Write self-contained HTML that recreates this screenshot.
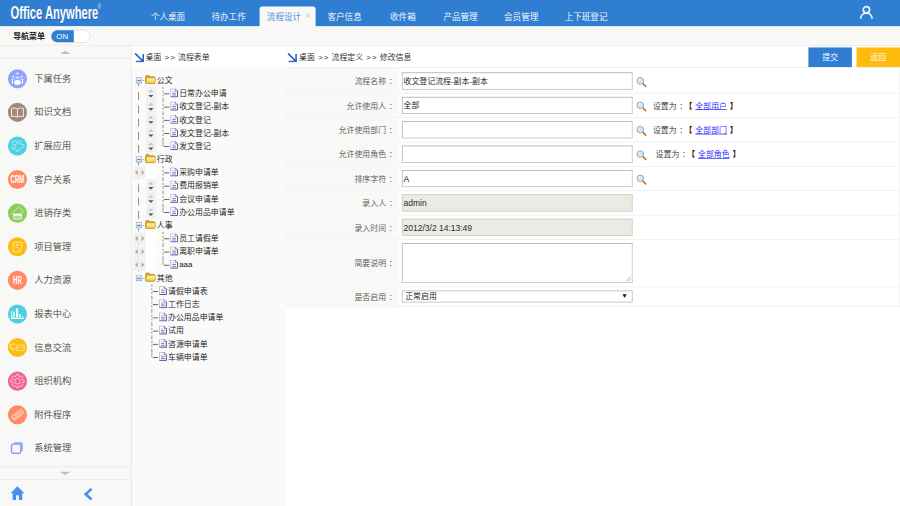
<!DOCTYPE html>
<html lang="zh-CN">
<head>
<meta charset="utf-8">
<title>Office Anywhere</title>
<style>
html,body{margin:0;padding:0;width:900px;height:506px;overflow:hidden;background:#fff;}
body{font-family:"Liberation Sans","Noto Sans CJK SC",sans-serif;font-weight:350;}
#stage{position:absolute;left:0;top:0;width:1366px;height:768px;transform:scale(0.658858);transform-origin:0 0;overflow:hidden;background:#fff;font-size:12px;color:#333;}
#stage *{box-sizing:border-box;}
.abs{position:absolute;}
/* header */
#hdr{position:absolute;left:0;top:0;width:1366px;height:40px;background:#2f7ed1;}
#logo{position:absolute;left:16px;top:3.5px;font-weight:bold;font-size:27px;line-height:32px;color:#fff;white-space:nowrap;transform:scaleX(0.628);transform-origin:0 50%;text-shadow:0 1px 1px rgba(0,0,0,.25);letter-spacing:0;}
#logo sup{font-size:12px;font-weight:normal;position:relative;top:-16px;left:-2px;vertical-align:baseline;opacity:.8;}
.tab{position:absolute;top:0;height:40px;line-height:53px;font-size:13px;color:#fff;white-space:nowrap;}
#tabact{position:absolute;left:394px;top:10px;width:85px;height:31px;background:#f8f8f6;border-radius:4px 4px 0 0;}
#tabact .t{position:absolute;left:11px;top:0;line-height:32.500px;font-size:13px;color:#3b7fd6;white-space:nowrap;}
#tabact .x{position:absolute;left:69px;top:0;line-height:29.500px;font-size:11px;color:#c9c9c9;}
/* toolbar row */
#bar2{position:absolute;left:0;top:40px;width:1366px;height:30px;background:#f8f8f6;border-bottom:1px solid #e2e2e0;}
#navlbl{position:absolute;left:20px;top:0;line-height:30px;font-size:12px;font-weight:bold;color:#222;}
#toggle{position:absolute;left:77px;top:5px;width:60px;height:20px;border-radius:10px;background:#fff;border:1px solid #d8d8d8;overflow:hidden;}
#toggle .on{position:absolute;left:-1px;top:-1px;width:35px;height:20px;background:#2f7ed1;color:#fff;font-size:12px;line-height:20px;text-align:center;padding-left:0;font-weight:400;border-radius:10px 0 0 10px;}
/* sidebar */
#side{position:absolute;left:0;top:70px;width:200px;height:698px;background:#f8f8f6;border-right:1px solid #d9d9d9;}
#sup{position:absolute;left:0;top:0;width:199px;height:19px;border-bottom:1px solid #e6e6e4;}
.tri{position:absolute;width:0;height:0;border-left:8px solid transparent;border-right:8px solid transparent;}
.mi{position:absolute;left:0;width:199px;height:51px;}
.mi .c{position:absolute;left:12px;top:11px;width:29px;height:29px;border-radius:50%;}
.mi .c svg{position:absolute;left:0;top:0;width:29px;height:29px;}
.mi .n{position:absolute;left:52px;top:0;line-height:50px;font-size:14px;color:#444;white-space:nowrap;}
.ctxt{position:absolute;left:-5px;top:0;width:39px;text-align:center;line-height:30px;color:#fff;font-weight:bold;font-size:15.5px;transform:scaleX(.6);}
#sdown{position:absolute;left:0;top:638px;width:199px;height:20px;border-top:1px solid #e2e2e0;border-bottom:1px solid #e6e6e4;}
/* tree frame */
#treef{position:absolute;left:200px;top:70px;width:234px;height:698px;background:#fafaf9;}
.crumb{position:absolute;left:0;top:0;height:32px;background:#fff;}
.crumb .tx{position:absolute;top:0;line-height:34px;font-size:12px;color:#262626;white-space:nowrap;}
.crumb svg{position:absolute;top:10px;width:15px;height:15px;margin-left:-1px;}
.tr{position:absolute;left:0;height:20px;width:234px;font-size:12px;color:#111;white-space:nowrap;}
.tr .lb{position:absolute;top:0;line-height:20px;}
.vline{position:absolute;width:0;border-left:1.300px dashed #5a5a5a;}
.vline.d{border-left:1.200px solid #3c3c3c;opacity:.85;}
.hline{position:absolute;height:1.300px;background:#1c1c1c;margin-top:-.200px;}
.spin{position:absolute;left:22px;top:0;width:15px;height:20px;background:#f1f1f0;}
.spin:before{content:"";position:absolute;left:3px;top:4px;border-left:4px solid transparent;border-right:4px solid transparent;border-bottom:4px solid #c4c4c4;}
.spin:after{content:"";position:absolute;left:3px;top:12px;border-left:4px solid transparent;border-right:4px solid transparent;border-top:4px solid #555;}
.hsp{position:absolute;left:3px;top:1px;width:35px;height:18px;background:#f0f0ef;}
.hsp i{position:absolute;left:18px;top:0;width:17px;height:18px;background:#fff;}
.hsp:before{content:"";position:absolute;left:2px;top:4.5px;border-top:4.5px solid transparent;border-bottom:4.5px solid transparent;border-right:4.5px solid #ababab;}
.hsp:after{content:"";position:absolute;left:12px;top:4.5px;border-top:4.5px solid transparent;border-bottom:4.5px solid transparent;border-left:4.5px solid #ababab;}
/* main frame */
#mainf{position:absolute;left:434px;top:70px;width:932px;height:698px;background:#fff;}
.btn{position:absolute;top:2px;height:30px;line-height:30px;color:#fff;font-size:12px;text-align:center;}
#tbl{position:absolute;left:0;top:32px;width:932px;border-right:1px solid #ececec;}
.row{position:relative;height:37px;border-top:1px solid #ebebea;background:#fff;}
.row .l{position:absolute;left:0;top:0;bottom:0;width:172px;padding-right:4px;background:#f8f8f6;text-align:right;line-height:38px;color:#555;font-size:12px;}
.inp{position:absolute;left:176px;top:5px;width:350px;height:26px;border:1px solid #b2b2b2;border-top-color:#9a9a9a;border-left-color:#a6a6a6;background:#fff;font-size:12px;line-height:25px;padding-left:1.500px;color:#111;white-space:nowrap;overflow:hidden;}
.inp.ro{background:#ebebe4;border-color:#c2c2be;color:#2a2a2a;font-size:12.900px;}
.inp.lat{font-size:13px;}
.row .l i{font-style:normal;margin-left:4px;}
.row.first{height:39px;padding-top:2px;}
.row.first .l{padding-top:2px;}
.gt{letter-spacing:1.5px;margin-left:1.5px;}
.row.first .inp{top:7px;}
.row.first .mag{top:13px;}
.mag{position:absolute;left:531px;top:11px;width:17px;height:17px;}
.setas{position:absolute;top:0;line-height:39px;font-size:12px;color:#333;white-space:nowrap;word-spacing:1px;}
.setas i{font-style:normal;margin-left:4px;margin-right:2px;}
.setas b{color:#3a0800;font-weight:bold;}
.setas a{color:#1a1aff;text-decoration:underline;}
</style>
</head>
<body>
<div id="stage">

<!-- HEADER -->
<div id="hdr">
  <div id="logo">Office Anywhere<sup>®</sup></div>
  <div class="tab" style="left:229px">个人桌面</div>
  <div class="tab" style="left:321px">待办工作</div>
  <div id="tabact"><span class="t">流程设计</span><span class="x">✕</span></div>
  <div class="tab" style="left:497px">客户信息</div>
  <div class="tab" style="left:592px">收件箱</div>
  <div class="tab" style="left:673px">产品管理</div>
  <div class="tab" style="left:765px">会员管理</div>
  <div class="tab" style="left:857px">上下班登记</div>
  <svg class="abs" style="left:1304px;top:8px;width:22px;height:22px" viewBox="0 0 24 24" fill="none" stroke="#eaf4ff" stroke-width="2.800"><circle cx="12" cy="7.400" r="5.200"/><path d="M2.5 22.5c0-6 4.5-9.6 9.500-9.600s9.500 3.600 9.500 9.600"/></svg>
</div>

<!-- SECOND BAR -->
<div id="bar2">
  <div id="navlbl">导航菜单</div>
  <div id="toggle"><div class="on">ON</div></div>
</div>

<!-- SIDEBAR -->
<div id="side">
  <div id="sup"><div class="tri" style="left:91px;top:7px;border-bottom:5px solid #afc0da;"></div></div>
  <div id="menu">
    <div class="mi" style="top:24px"><div class="c" style="background:#8fa4ff"><svg viewBox="0 0 29 29" fill="#fff"><circle cx="14.500" cy="6.600" r="1.500"/><circle cx="8.200" cy="11.200" r="1.400"/><circle cx="20.800" cy="11.200" r="1.400"/><rect x="6" y="14.500" width="1.500" height="8" rx=".700"/><rect x="21.500" y="14.500" width="1.500" height="8" rx=".700"/><rect x="11.800" y="11" width="1.300" height="3.500" fill-opacity=".9"/><rect x="14" y="11" width="1.300" height="3.500" fill-opacity=".9"/><rect x="16.200" y="11" width="1.300" height="3.500" fill-opacity=".9"/><path d="M8.500 13.500 Q9.500 16 10.500 17 M20.500 13.500 Q19.500 16 18.500 17" stroke="#fff" stroke-width=".700" fill="none" stroke-opacity=".8"/><ellipse cx="14.500" cy="20.300" rx="5.200" ry="3.700"/></svg></div><span class="n">下属任务</span></div>
    <div class="mi" style="top:75px"><div class="c" style="background:#a1887f"><svg viewBox="0 0 29 29" fill="none" stroke="#fff2e0" stroke-width="1.400" stroke-linejoin="round"><path d="M14.500 9.300 C12 7.800 8.500 7.800 5.500 8.600 V21 C8.500 20.200 12 20.200 14.500 21.700 C17 20.200 20.500 20.200 23.500 21 V8.600 C20.500 7.800 17 7.800 14.500 9.300 Z M14.500 9.300 V21.500"/></svg></div><span class="n">知识文档</span></div>
    <div class="mi" style="top:126px"><div class="c" style="background:#4dd0e1"><svg viewBox="0 0 29 29" fill="none" stroke="#d4f5fa" stroke-width="1" stroke-opacity=".85" stroke-linejoin="round"><path d="M6.600 7 H12.800 V11.600 H16.200 V7 H20.100 V12.400 H24.400 V16.200 H20.100 V19.300 H16.200 V22.800 H12.800 V19.300 H6.600 V16.200 H11.600 V12.400 H6.600 Z"/></svg></div><span class="n">扩展应用</span></div>
    <div class="mi" style="top:177px"><div class="c" style="background:#ff8a65"><span class="ctxt">CRM</span></div><span class="n">客户关系</span></div>
    <div class="mi" style="top:228px"><div class="c" style="background:#8ccc5a"><svg viewBox="0 0 29 29" fill="none" stroke="#fff" stroke-linejoin="round"><path d="M4.200 16.500 L16.300 5.200 L23.400 12.100 L21 14.600" stroke-width="1" stroke-opacity=".9"/><rect x="8.600" y="16" width="12" height="7.600" fill="#fff" fill-opacity=".3" stroke-width="1.100"/><rect x="8.300" y="15.600" width="12.600" height="2.800" fill="#fff" stroke="none"/></svg></div><span class="n">进销存类</span></div>
    <div class="mi" style="top:279px"><div class="c" style="background:#fdbc12"><svg viewBox="0 0 29 29" fill="none" stroke="#fff0c4" stroke-width="1.200" stroke-linejoin="round"><path d="M16 22.300 H8 V7.800 H21 V17"/><path d="M11.500 12 H17" stroke-width="1.800"/><path d="M11.500 15.700 H14.700" stroke-width="1.300"/><path d="M18 16.800 Q20.300 19.500 20 20.500 A2 2 0 0 1 16 20.500 Q15.800 19.500 18 16.800 Z" stroke-width="1"/></svg></div><span class="n">项目管理</span></div>
    <div class="mi" style="top:330px"><div class="c" style="background:#ff8a65"><span class="ctxt">HR</span></div><span class="n">人力资源</span></div>
    <div class="mi" style="top:381px"><div class="c" style="background:#4dd0e1"><svg viewBox="0 0 29 29" fill="#fff"><rect x="5" y="10" width="1.500" height="12"/><rect x="5" y="20.300" width="19" height="1.700"/><rect x="8.100" y="10.800" width="2.300" height="9"/><rect x="12.400" y="6.200" width="3" height="13.600"/><rect x="17" y="14.700" width="2.300" height="5.100"/><rect x="20.900" y="18.200" width="2.700" height="1.600" fill-opacity=".7"/></svg></div><span class="n">报表中心</span></div>
    <div class="mi" style="top:432px"><div class="c" style="background:#fdbc12"><svg viewBox="0 0 29 29" fill="none" stroke="#fff0c4" stroke-width="1.100" stroke-linejoin="round"><path d="M13 9.300 H4.200 V16.200 H7 L7.300 18.800 L10.500 16.200 H13"/><path d="M13.500 10.800 H24.600 V18.900 H22 L21.200 20.500 L19.500 18.900 H13.500 Z"/><path d="M15.500 14.800 H22" stroke-width="1.500" stroke-dasharray="1.400 1.100"/></svg></div><span class="n">信息交流</span></div>
    <div class="mi" style="top:483px"><div class="c" style="background:#f06292"><svg viewBox="0 0 29 29" fill="none" stroke="#ffe0ec" stroke-width="1.100" stroke-linejoin="round"><circle cx="14.500" cy="14.500" r="4.300"/><path d="M12.55 6.85 L12.77 4.45 L16.23 4.45 L16.45 6.85 L18.53 7.71 L20.39 6.17 L22.83 8.61 L21.29 10.47 L22.15 12.55 L24.55 12.77 L24.55 16.23 L22.15 16.45 L21.29 18.53 L22.83 20.39 L20.39 22.83 L18.53 21.29 L16.45 22.15 L16.23 24.55 L12.77 24.55 L12.55 22.15 L10.47 21.29 L8.61 22.83 L6.17 20.39 L7.71 18.53 L6.85 16.45 L4.45 16.23 L4.45 12.77 L6.85 12.55 L7.71 10.47 L6.17 8.61 L8.61 6.17 L10.47 7.71 Z"/></svg></div><span class="n">组织机构</span></div>
    <div class="mi" style="top:534px"><div class="c" style="background:#ff8a65"><svg viewBox="0 0 29 29" fill="none" stroke="#ffece4" stroke-width="1.200" stroke-linecap="round"><g transform="translate(14.500 14.800) rotate(-37)"><path d="M-6 3.700 H6.300 A3.700 3.700 0 0 0 6.300 -3.700 H-6.300 A2.500 2.500 0 0 0 -6.300 1.300 H5.800 A1.300 1.300 0 0 0 5.800 -1.300 H-4.500"/><path d="M-6 3.700 A3.700 3.700 0 0 1 -9.600 0"/></g></svg></div><span class="n">附件程序</span></div>
    <div class="mi" style="top:585px"><svg class="abs" style="left:15px;top:15px;width:22px;height:22px" viewBox="0 0 22 22"><rect x="5.500" y="1" width="14.500" height="14.500" rx="3" fill="#a9b6ff"/><rect x="2.500" y="4" width="14" height="14" rx="2.500" fill="#f8f8f6" stroke="#8c9eff" stroke-width="2.200"/></svg><span class="n">系统管理</span></div>
  </div><!--/menu-->
  <div id="sdown"><div class="tri" style="left:91px;top:7px;border-top:5px solid #afc0da;"></div></div>
  <svg class="abs" style="left:14.5px;top:667px;width:23px;height:23px" viewBox="0 0 22 22"><path d="M11 1 L1 11 H4 V21 H9 V14 H13 V21 H18 V11 H21 Z" fill="#4a8ef0"/></svg>
  <svg class="abs" style="left:126px;top:670px;width:16px;height:20px" viewBox="0 0 16 20" fill="none" stroke="#4a8ef0" stroke-width="4"><path d="M13 2 L4 10 L13 18"/></svg>
</div>

<!-- TREE FRAME -->
<div id="treef">
  <div class="crumb" style="width:234px">
    <svg style="left:5px" viewBox="0 0 14 14" fill="none" stroke="#2f62c8" stroke-width="2.300"><path d="M1 1 L12 12 M12.500 2 V12.500 H2"/></svg>
    <span class="tx" style="left:21px">桌面 <span class="gt">&gt;&gt;</span> 流程表单</span>
  </div>
  <div id="tree">
    <div class="tr" style="top:42px"><div class="hline" style="left:16px;top:10px;width:3px;opacity:.45"></div><div class="vline d" style="left:10px;top:15px;height:4px"></div><svg class="abs" style="left:6px;top:5px;width:10px;height:10px" viewBox="0 0 10 10"><rect x=".500" y=".500" width="9" height="9" rx="1.500" fill="url(#mg)" stroke="#5b8ed6" stroke-width="1"/><path d="M2.500 5 H7.500" stroke="#4a5568" stroke-width="1.200"/></svg><svg class="abs" style="left:20px;top:1px;width:17px;height:15px" viewBox="0 0 17 15"><path d="M1 3.500 Q1 1.500 2.800 1.500 H5.500 Q6.500 1.500 7 2.500 L7.500 3.500 H13.500 Q15 3.500 15 5 V12.500 Q15 14 13.500 14 H2.500 Q1 14 1 12.500 Z" fill="#dcae2a" stroke="#a67c12" stroke-width="1"/><path d="M2.200 6.500 Q2.400 5.300 3.700 5.300 H15 Q16.300 5.300 16.100 6.500 L15.300 12.600 Q15.100 13.700 13.900 13.700 H2.600 Q1.400 13.700 1.500 12.500 Z" fill="url(#fg)" stroke="#c39a22" stroke-width=".800"/></svg><span class="lb" style="left:38px">公文</span></div>
    <div class="tr" style="top:62px"><div class="vline d" style="left:10px;top:8px;height:12px"></div><div class="vline" style="left:47px;top:0;height:20px"></div><div class="hline" style="left:49px;top:10px;width:8px"></div><div class="spin"></div><svg class="abs" style="left:58px;top:2px;width:13px;height:14px" viewBox="0 0 13 14"><path d="M1 1 H8 L11.500 4.500 V13 H1 Z" fill="#fff" stroke="#98a8de" stroke-width="1"/><path d="M8 1 L11.500 4.500 V13 H1" fill="none" stroke="#33439a" stroke-width="1.200"/><path d="M8 1 V4.500 H11.500" fill="#e4eafb" stroke="#33439a" stroke-width=".700"/><path d="M3.500 5 H6.500" stroke="#8ea2e6" stroke-width="1"/><path d="M3.500 7.500 H9" stroke="#cf5f86" stroke-width="1.500"/><path d="M3.500 10.200 H9" stroke="#5a72d0" stroke-width="1.400"/></svg><span class="lb" style="left:72px">日常办公申请</span></div>
    <div class="tr" style="top:82px"><div class="vline d" style="left:10px;top:8px;height:12px"></div><div class="vline" style="left:47px;top:0;height:20px"></div><div class="hline" style="left:49px;top:10px;width:8px"></div><div class="spin"></div><svg class="abs" style="left:58px;top:2px;width:13px;height:14px" viewBox="0 0 13 14"><path d="M1 1 H8 L11.500 4.500 V13 H1 Z" fill="#fff" stroke="#98a8de" stroke-width="1"/><path d="M8 1 L11.500 4.500 V13 H1" fill="none" stroke="#33439a" stroke-width="1.200"/><path d="M8 1 V4.500 H11.500" fill="#e4eafb" stroke="#33439a" stroke-width=".700"/><path d="M3.500 5 H6.500" stroke="#8ea2e6" stroke-width="1"/><path d="M3.500 7.500 H9" stroke="#cf5f86" stroke-width="1.500"/><path d="M3.500 10.200 H9" stroke="#5a72d0" stroke-width="1.400"/></svg><span class="lb" style="left:72px">收文登记-副本</span></div>
    <div class="tr" style="top:102px"><div class="vline d" style="left:10px;top:8px;height:12px"></div><div class="vline" style="left:47px;top:0;height:20px"></div><div class="hline" style="left:49px;top:10px;width:8px"></div><div class="spin"></div><svg class="abs" style="left:58px;top:2px;width:13px;height:14px" viewBox="0 0 13 14"><path d="M1 1 H8 L11.500 4.500 V13 H1 Z" fill="#fff" stroke="#98a8de" stroke-width="1"/><path d="M8 1 L11.500 4.500 V13 H1" fill="none" stroke="#33439a" stroke-width="1.200"/><path d="M8 1 V4.500 H11.500" fill="#e4eafb" stroke="#33439a" stroke-width=".700"/><path d="M3.500 5 H6.500" stroke="#8ea2e6" stroke-width="1"/><path d="M3.500 7.500 H9" stroke="#cf5f86" stroke-width="1.500"/><path d="M3.500 10.200 H9" stroke="#5a72d0" stroke-width="1.400"/></svg><span class="lb" style="left:72px">收文登记</span></div>
    <div class="tr" style="top:122px"><div class="vline d" style="left:10px;top:8px;height:12px"></div><div class="vline" style="left:47px;top:0;height:20px"></div><div class="hline" style="left:49px;top:10px;width:8px"></div><div class="spin"></div><svg class="abs" style="left:58px;top:2px;width:13px;height:14px" viewBox="0 0 13 14"><path d="M1 1 H8 L11.500 4.500 V13 H1 Z" fill="#fff" stroke="#98a8de" stroke-width="1"/><path d="M8 1 L11.500 4.500 V13 H1" fill="none" stroke="#33439a" stroke-width="1.200"/><path d="M8 1 V4.500 H11.500" fill="#e4eafb" stroke="#33439a" stroke-width=".700"/><path d="M3.500 5 H6.500" stroke="#8ea2e6" stroke-width="1"/><path d="M3.500 7.500 H9" stroke="#cf5f86" stroke-width="1.500"/><path d="M3.500 10.200 H9" stroke="#5a72d0" stroke-width="1.400"/></svg><span class="lb" style="left:72px">发文登记-副本</span></div>
    <div class="tr" style="top:142px"><div class="vline d" style="left:10px;top:8px;height:12px"></div><div class="vline" style="left:47px;top:0;height:10px"></div><div class="hline" style="left:49px;top:10px;width:8px"></div><div class="spin"></div><svg class="abs" style="left:58px;top:2px;width:13px;height:14px" viewBox="0 0 13 14"><path d="M1 1 H8 L11.500 4.500 V13 H1 Z" fill="#fff" stroke="#98a8de" stroke-width="1"/><path d="M8 1 L11.500 4.500 V13 H1" fill="none" stroke="#33439a" stroke-width="1.200"/><path d="M8 1 V4.500 H11.500" fill="#e4eafb" stroke="#33439a" stroke-width=".700"/><path d="M3.500 5 H6.500" stroke="#8ea2e6" stroke-width="1"/><path d="M3.500 7.500 H9" stroke="#cf5f86" stroke-width="1.500"/><path d="M3.500 10.200 H9" stroke="#5a72d0" stroke-width="1.400"/></svg><span class="lb" style="left:72px">发文登记</span></div>
    <div class="tr" style="top:162px"><div class="hline" style="left:16px;top:10px;width:3px;opacity:.45"></div><div class="vline d" style="left:10px;top:15px;height:4px"></div><svg class="abs" style="left:6px;top:5px;width:10px;height:10px" viewBox="0 0 10 10"><rect x=".500" y=".500" width="9" height="9" rx="1.500" fill="url(#mg)" stroke="#5b8ed6" stroke-width="1"/><path d="M2.500 5 H7.500" stroke="#4a5568" stroke-width="1.200"/></svg><svg class="abs" style="left:20px;top:1px;width:17px;height:15px" viewBox="0 0 17 15"><path d="M1 3.500 Q1 1.500 2.800 1.500 H5.500 Q6.500 1.500 7 2.500 L7.500 3.500 H13.500 Q15 3.500 15 5 V12.500 Q15 14 13.500 14 H2.500 Q1 14 1 12.500 Z" fill="#dcae2a" stroke="#a67c12" stroke-width="1"/><path d="M2.200 6.500 Q2.400 5.300 3.700 5.300 H15 Q16.300 5.300 16.100 6.500 L15.300 12.600 Q15.100 13.700 13.900 13.700 H2.600 Q1.400 13.700 1.500 12.500 Z" fill="url(#fg)" stroke="#c39a22" stroke-width=".800"/></svg><span class="lb" style="left:38px">行政</span></div>
    <div class="tr" style="top:182px"><div class="vline d" style="left:10px;top:8px;height:12px"></div><div class="vline" style="left:47px;top:0;height:20px"></div><div class="hline" style="left:49px;top:10px;width:8px"></div><div class="hsp"><i></i></div><svg class="abs" style="left:58px;top:2px;width:13px;height:14px" viewBox="0 0 13 14"><path d="M1 1 H8 L11.500 4.500 V13 H1 Z" fill="#fff" stroke="#98a8de" stroke-width="1"/><path d="M8 1 L11.500 4.500 V13 H1" fill="none" stroke="#33439a" stroke-width="1.200"/><path d="M8 1 V4.500 H11.500" fill="#e4eafb" stroke="#33439a" stroke-width=".700"/><path d="M3.500 5 H6.500" stroke="#8ea2e6" stroke-width="1"/><path d="M3.500 7.500 H9" stroke="#cf5f86" stroke-width="1.500"/><path d="M3.500 10.200 H9" stroke="#5a72d0" stroke-width="1.400"/></svg><span class="lb" style="left:72px">采购申请单</span></div>
    <div class="tr" style="top:202px"><div class="vline d" style="left:10px;top:8px;height:12px"></div><div class="vline" style="left:47px;top:0;height:20px"></div><div class="hline" style="left:49px;top:10px;width:8px"></div><div class="spin"></div><svg class="abs" style="left:58px;top:2px;width:13px;height:14px" viewBox="0 0 13 14"><path d="M1 1 H8 L11.500 4.500 V13 H1 Z" fill="#fff" stroke="#98a8de" stroke-width="1"/><path d="M8 1 L11.500 4.500 V13 H1" fill="none" stroke="#33439a" stroke-width="1.200"/><path d="M8 1 V4.500 H11.500" fill="#e4eafb" stroke="#33439a" stroke-width=".700"/><path d="M3.500 5 H6.500" stroke="#8ea2e6" stroke-width="1"/><path d="M3.500 7.500 H9" stroke="#cf5f86" stroke-width="1.500"/><path d="M3.500 10.200 H9" stroke="#5a72d0" stroke-width="1.400"/></svg><span class="lb" style="left:72px">费用报销单</span></div>
    <div class="tr" style="top:222px"><div class="vline d" style="left:10px;top:8px;height:12px"></div><div class="vline" style="left:47px;top:0;height:20px"></div><div class="hline" style="left:49px;top:10px;width:8px"></div><div class="spin"></div><svg class="abs" style="left:58px;top:2px;width:13px;height:14px" viewBox="0 0 13 14"><path d="M1 1 H8 L11.500 4.500 V13 H1 Z" fill="#fff" stroke="#98a8de" stroke-width="1"/><path d="M8 1 L11.500 4.500 V13 H1" fill="none" stroke="#33439a" stroke-width="1.200"/><path d="M8 1 V4.500 H11.500" fill="#e4eafb" stroke="#33439a" stroke-width=".700"/><path d="M3.500 5 H6.500" stroke="#8ea2e6" stroke-width="1"/><path d="M3.500 7.500 H9" stroke="#cf5f86" stroke-width="1.500"/><path d="M3.500 10.200 H9" stroke="#5a72d0" stroke-width="1.400"/></svg><span class="lb" style="left:72px">会议申请单</span></div>
    <div class="tr" style="top:242px"><div class="vline d" style="left:10px;top:8px;height:12px"></div><div class="vline" style="left:47px;top:0;height:10px"></div><div class="hline" style="left:49px;top:10px;width:8px"></div><div class="spin"></div><svg class="abs" style="left:58px;top:2px;width:13px;height:14px" viewBox="0 0 13 14"><path d="M1 1 H8 L11.500 4.500 V13 H1 Z" fill="#fff" stroke="#98a8de" stroke-width="1"/><path d="M8 1 L11.500 4.500 V13 H1" fill="none" stroke="#33439a" stroke-width="1.200"/><path d="M8 1 V4.500 H11.500" fill="#e4eafb" stroke="#33439a" stroke-width=".700"/><path d="M3.500 5 H6.500" stroke="#8ea2e6" stroke-width="1"/><path d="M3.500 7.500 H9" stroke="#cf5f86" stroke-width="1.500"/><path d="M3.500 10.200 H9" stroke="#5a72d0" stroke-width="1.400"/></svg><span class="lb" style="left:72px">办公用品申请单</span></div>
    <div class="tr" style="top:262px"><div class="hline" style="left:16px;top:10px;width:3px;opacity:.45"></div><div class="vline d" style="left:10px;top:15px;height:4px"></div><svg class="abs" style="left:6px;top:5px;width:10px;height:10px" viewBox="0 0 10 10"><rect x=".500" y=".500" width="9" height="9" rx="1.500" fill="url(#mg)" stroke="#5b8ed6" stroke-width="1"/><path d="M2.500 5 H7.500" stroke="#4a5568" stroke-width="1.200"/></svg><svg class="abs" style="left:20px;top:1px;width:17px;height:15px" viewBox="0 0 17 15"><path d="M1 3.500 Q1 1.500 2.800 1.500 H5.500 Q6.500 1.500 7 2.500 L7.500 3.500 H13.500 Q15 3.500 15 5 V12.500 Q15 14 13.500 14 H2.500 Q1 14 1 12.500 Z" fill="#dcae2a" stroke="#a67c12" stroke-width="1"/><path d="M2.200 6.500 Q2.400 5.300 3.700 5.300 H15 Q16.300 5.300 16.100 6.500 L15.300 12.600 Q15.100 13.700 13.900 13.700 H2.600 Q1.400 13.700 1.500 12.500 Z" fill="url(#fg)" stroke="#c39a22" stroke-width=".800"/></svg><span class="lb" style="left:38px">人事</span></div>
    <div class="tr" style="top:282px"><div class="vline d" style="left:10px;top:8px;height:12px"></div><div class="vline" style="left:47px;top:0;height:20px"></div><div class="hline" style="left:49px;top:10px;width:8px"></div><div class="hsp"><i></i></div><svg class="abs" style="left:58px;top:2px;width:13px;height:14px" viewBox="0 0 13 14"><path d="M1 1 H8 L11.500 4.500 V13 H1 Z" fill="#fff" stroke="#98a8de" stroke-width="1"/><path d="M8 1 L11.500 4.500 V13 H1" fill="none" stroke="#33439a" stroke-width="1.200"/><path d="M8 1 V4.500 H11.500" fill="#e4eafb" stroke="#33439a" stroke-width=".700"/><path d="M3.500 5 H6.500" stroke="#8ea2e6" stroke-width="1"/><path d="M3.500 7.500 H9" stroke="#cf5f86" stroke-width="1.500"/><path d="M3.500 10.200 H9" stroke="#5a72d0" stroke-width="1.400"/></svg><span class="lb" style="left:72px">员工请假单</span></div>
    <div class="tr" style="top:302px"><div class="vline d" style="left:10px;top:8px;height:12px"></div><div class="vline" style="left:47px;top:0;height:20px"></div><div class="hline" style="left:49px;top:10px;width:8px"></div><div class="hsp"><i></i></div><svg class="abs" style="left:58px;top:2px;width:13px;height:14px" viewBox="0 0 13 14"><path d="M1 1 H8 L11.500 4.500 V13 H1 Z" fill="#fff" stroke="#98a8de" stroke-width="1"/><path d="M8 1 L11.500 4.500 V13 H1" fill="none" stroke="#33439a" stroke-width="1.200"/><path d="M8 1 V4.500 H11.500" fill="#e4eafb" stroke="#33439a" stroke-width=".700"/><path d="M3.500 5 H6.500" stroke="#8ea2e6" stroke-width="1"/><path d="M3.500 7.500 H9" stroke="#cf5f86" stroke-width="1.500"/><path d="M3.500 10.200 H9" stroke="#5a72d0" stroke-width="1.400"/></svg><span class="lb" style="left:72px">离职申请单</span></div>
    <div class="tr" style="top:322px"><div class="vline d" style="left:10px;top:8px;height:12px"></div><div class="vline" style="left:47px;top:0;height:10px"></div><div class="hline" style="left:49px;top:10px;width:8px"></div><div class="hsp"><i></i></div><svg class="abs" style="left:58px;top:2px;width:13px;height:14px" viewBox="0 0 13 14"><path d="M1 1 H8 L11.500 4.500 V13 H1 Z" fill="#fff" stroke="#98a8de" stroke-width="1"/><path d="M8 1 L11.500 4.500 V13 H1" fill="none" stroke="#33439a" stroke-width="1.200"/><path d="M8 1 V4.500 H11.500" fill="#e4eafb" stroke="#33439a" stroke-width=".700"/><path d="M3.500 5 H6.500" stroke="#8ea2e6" stroke-width="1"/><path d="M3.500 7.500 H9" stroke="#cf5f86" stroke-width="1.500"/><path d="M3.500 10.200 H9" stroke="#5a72d0" stroke-width="1.400"/></svg><span class="lb" style="left:72px">aaa</span></div>
    <div class="tr" style="top:342px"><div class="hline" style="left:16px;top:10px;width:3px;opacity:.45"></div><svg class="abs" style="left:6px;top:5px;width:10px;height:10px" viewBox="0 0 10 10"><rect x=".500" y=".500" width="9" height="9" rx="1.500" fill="url(#mg)" stroke="#5b8ed6" stroke-width="1"/><path d="M2.500 5 H7.500" stroke="#4a5568" stroke-width="1.200"/></svg><svg class="abs" style="left:20px;top:1px;width:17px;height:15px" viewBox="0 0 17 15"><path d="M1 3.500 Q1 1.500 2.800 1.500 H5.500 Q6.500 1.500 7 2.500 L7.500 3.500 H13.500 Q15 3.500 15 5 V12.500 Q15 14 13.500 14 H2.500 Q1 14 1 12.500 Z" fill="#dcae2a" stroke="#a67c12" stroke-width="1"/><path d="M2.200 6.500 Q2.400 5.300 3.700 5.300 H15 Q16.300 5.300 16.100 6.500 L15.300 12.600 Q15.100 13.700 13.900 13.700 H2.600 Q1.400 13.700 1.500 12.500 Z" fill="url(#fg)" stroke="#c39a22" stroke-width=".800"/></svg><span class="lb" style="left:38px">其他</span></div>
    <div class="tr" style="top:362px"><div class="vline" style="left:30px;top:0;height:20px"></div><div class="hline" style="left:32px;top:10px;width:8px"></div><svg class="abs" style="left:41px;top:2px;width:13px;height:14px" viewBox="0 0 13 14"><path d="M1 1 H8 L11.500 4.500 V13 H1 Z" fill="#fff" stroke="#98a8de" stroke-width="1"/><path d="M8 1 L11.500 4.500 V13 H1" fill="none" stroke="#33439a" stroke-width="1.200"/><path d="M8 1 V4.500 H11.500" fill="#e4eafb" stroke="#33439a" stroke-width=".700"/><path d="M3.500 5 H6.500" stroke="#8ea2e6" stroke-width="1"/><path d="M3.500 7.500 H9" stroke="#cf5f86" stroke-width="1.500"/><path d="M3.500 10.200 H9" stroke="#5a72d0" stroke-width="1.400"/></svg><span class="lb" style="left:55px">请假申请表</span></div>
    <div class="tr" style="top:382px"><div class="vline" style="left:30px;top:0;height:20px"></div><div class="hline" style="left:32px;top:10px;width:8px"></div><svg class="abs" style="left:41px;top:2px;width:13px;height:14px" viewBox="0 0 13 14"><path d="M1 1 H8 L11.500 4.500 V13 H1 Z" fill="#fff" stroke="#98a8de" stroke-width="1"/><path d="M8 1 L11.500 4.500 V13 H1" fill="none" stroke="#33439a" stroke-width="1.200"/><path d="M8 1 V4.500 H11.500" fill="#e4eafb" stroke="#33439a" stroke-width=".700"/><path d="M3.500 5 H6.500" stroke="#8ea2e6" stroke-width="1"/><path d="M3.500 7.500 H9" stroke="#cf5f86" stroke-width="1.500"/><path d="M3.500 10.200 H9" stroke="#5a72d0" stroke-width="1.400"/></svg><span class="lb" style="left:55px">工作日志</span></div>
    <div class="tr" style="top:402px"><div class="vline" style="left:30px;top:0;height:20px"></div><div class="hline" style="left:32px;top:10px;width:8px"></div><svg class="abs" style="left:41px;top:2px;width:13px;height:14px" viewBox="0 0 13 14"><path d="M1 1 H8 L11.500 4.500 V13 H1 Z" fill="#fff" stroke="#98a8de" stroke-width="1"/><path d="M8 1 L11.500 4.500 V13 H1" fill="none" stroke="#33439a" stroke-width="1.200"/><path d="M8 1 V4.500 H11.500" fill="#e4eafb" stroke="#33439a" stroke-width=".700"/><path d="M3.500 5 H6.500" stroke="#8ea2e6" stroke-width="1"/><path d="M3.500 7.500 H9" stroke="#cf5f86" stroke-width="1.500"/><path d="M3.500 10.200 H9" stroke="#5a72d0" stroke-width="1.400"/></svg><span class="lb" style="left:55px">办公用品申请单</span></div>
    <div class="tr" style="top:422px"><div class="vline" style="left:30px;top:0;height:20px"></div><div class="hline" style="left:32px;top:10px;width:8px"></div><svg class="abs" style="left:41px;top:2px;width:13px;height:14px" viewBox="0 0 13 14"><path d="M1 1 H8 L11.500 4.500 V13 H1 Z" fill="#fff" stroke="#98a8de" stroke-width="1"/><path d="M8 1 L11.500 4.500 V13 H1" fill="none" stroke="#33439a" stroke-width="1.200"/><path d="M8 1 V4.500 H11.500" fill="#e4eafb" stroke="#33439a" stroke-width=".700"/><path d="M3.500 5 H6.500" stroke="#8ea2e6" stroke-width="1"/><path d="M3.500 7.500 H9" stroke="#cf5f86" stroke-width="1.500"/><path d="M3.500 10.200 H9" stroke="#5a72d0" stroke-width="1.400"/></svg><span class="lb" style="left:55px">试用</span></div>
    <div class="tr" style="top:442px"><div class="vline" style="left:30px;top:0;height:20px"></div><div class="hline" style="left:32px;top:10px;width:8px"></div><svg class="abs" style="left:41px;top:2px;width:13px;height:14px" viewBox="0 0 13 14"><path d="M1 1 H8 L11.500 4.500 V13 H1 Z" fill="#fff" stroke="#98a8de" stroke-width="1"/><path d="M8 1 L11.500 4.500 V13 H1" fill="none" stroke="#33439a" stroke-width="1.200"/><path d="M8 1 V4.500 H11.500" fill="#e4eafb" stroke="#33439a" stroke-width=".700"/><path d="M3.500 5 H6.500" stroke="#8ea2e6" stroke-width="1"/><path d="M3.500 7.500 H9" stroke="#cf5f86" stroke-width="1.500"/><path d="M3.500 10.200 H9" stroke="#5a72d0" stroke-width="1.400"/></svg><span class="lb" style="left:55px">咨源申请单</span></div>
    <div class="tr" style="top:462px"><div class="vline" style="left:30px;top:0;height:10px"></div><div class="hline" style="left:32px;top:10px;width:8px"></div><svg class="abs" style="left:41px;top:2px;width:13px;height:14px" viewBox="0 0 13 14"><path d="M1 1 H8 L11.500 4.500 V13 H1 Z" fill="#fff" stroke="#98a8de" stroke-width="1"/><path d="M8 1 L11.500 4.500 V13 H1" fill="none" stroke="#33439a" stroke-width="1.200"/><path d="M8 1 V4.500 H11.500" fill="#e4eafb" stroke="#33439a" stroke-width=".700"/><path d="M3.500 5 H6.500" stroke="#8ea2e6" stroke-width="1"/><path d="M3.500 7.500 H9" stroke="#cf5f86" stroke-width="1.500"/><path d="M3.500 10.200 H9" stroke="#5a72d0" stroke-width="1.400"/></svg><span class="lb" style="left:55px">车辆申请单</span></div>
  </div><!--/tree-->
</div>

<!-- MAIN FRAME -->
<div id="mainf">
  <div class="crumb" style="width:932px">
    <svg style="left:3px" viewBox="0 0 14 14" fill="none" stroke="#2f62c8" stroke-width="2.300"><path d="M1 1 L12 12 M12.500 2 V12.500 H2"/></svg>
    <span class="tx" style="left:20px">桌面 <span class="gt">&gt;&gt;</span> 流程定义 <span class="gt">&gt;&gt;</span> 修改信息</span>
    <div class="btn" style="left:793px;width:66px;background:#2f7ed1">提交</div>
    <div class="btn" style="left:866px;width:66px;background:#fdbb10">返回</div>
  </div>
  <div id="tbl">
    <div class="row first"><div class="l">流程名称<i>：</i></div><div class="inp">收文登记流程-副本-副本</div><svg class="mag" viewBox="0 0 17 17"><path d="M10.500 10.500 L15 15" stroke="#c8782a" stroke-width="2.600" stroke-linecap="round"/><circle cx="6.800" cy="6.800" r="5" fill="#cfe6fa" stroke="#9aa7b4" stroke-width="1.500"/><path d="M3.800 6.500 A3.200 3.200 0 0 1 6.500 3.800" stroke="#fff" stroke-width="1.200" fill="none"/></svg></div>
    <div class="row"><div class="l">允许使用人<i>：</i></div><div class="inp">全部</div><svg class="mag" viewBox="0 0 17 17"><path d="M10.500 10.500 L15 15" stroke="#c8782a" stroke-width="2.600" stroke-linecap="round"/><circle cx="6.800" cy="6.800" r="5" fill="#cfe6fa" stroke="#9aa7b4" stroke-width="1.500"/><path d="M3.800 6.500 A3.200 3.200 0 0 1 6.500 3.800" stroke="#fff" stroke-width="1.200" fill="none"/></svg><span class="setas" style="left:557px">设置为<i>：</i><b>【</b> <a>全部用户</a> <b>】</b></span></div>
    <div class="row"><div class="l">允许使用部门<i>：</i></div><div class="inp"></div><svg class="mag" viewBox="0 0 17 17"><path d="M10.500 10.500 L15 15" stroke="#c8782a" stroke-width="2.600" stroke-linecap="round"/><circle cx="6.800" cy="6.800" r="5" fill="#cfe6fa" stroke="#9aa7b4" stroke-width="1.500"/><path d="M3.800 6.500 A3.200 3.200 0 0 1 6.500 3.800" stroke="#fff" stroke-width="1.200" fill="none"/></svg><span class="setas" style="left:557px">设置为<i>：</i><b>【</b> <a>全部部门</a> <b>】</b></span></div>
    <div class="row"><div class="l">允许使用角色<i>：</i></div><div class="inp"></div><svg class="mag" viewBox="0 0 17 17"><path d="M10.500 10.500 L15 15" stroke="#c8782a" stroke-width="2.600" stroke-linecap="round"/><circle cx="6.800" cy="6.800" r="5" fill="#cfe6fa" stroke="#9aa7b4" stroke-width="1.500"/><path d="M3.800 6.500 A3.200 3.200 0 0 1 6.500 3.800" stroke="#fff" stroke-width="1.200" fill="none"/></svg><span class="setas" style="left:561px">设置为<i>：</i><b>【</b> <a>全部角色</a> <b>】</b></span></div>
    <div class="row"><div class="l">排序字符<i>：</i></div><div class="inp lat">A</div><svg class="mag" viewBox="0 0 17 17"><path d="M10.500 10.500 L15 15" stroke="#c8782a" stroke-width="2.600" stroke-linecap="round"/><circle cx="6.800" cy="6.800" r="5" fill="#cfe6fa" stroke="#9aa7b4" stroke-width="1.500"/><path d="M3.800 6.500 A3.200 3.200 0 0 1 6.500 3.800" stroke="#fff" stroke-width="1.200" fill="none"/></svg></div>
    <div class="row"><div class="l">录入人<i>：</i></div><div class="inp ro">admin</div></div>
    <div class="row"><div class="l">录入时间<i>：</i></div><div class="inp ro">2012/3/2 14:13:49</div></div>
    <div class="row" style="height:71.5px"><div class="l" style="line-height:73px">简要说明<i>：</i></div><div class="inp" style="top:5px;height:60px"><svg class="abs" style="right:1px;bottom:1px;width:9px;height:9px" viewBox="0 0 9 9" stroke="#888" stroke-width="1"><path d="M8.500 1.500 L1.500 8.500 M8.500 5.500 L5.500 8.500"/></svg></div></div>
    <div class="row" style="height:31.5px;border-bottom:1px solid #ebebea"><div class="l" style="line-height:32px">是否启用<i>：</i></div><div class="inp" style="top:5px;height:18.5px;line-height:16.5px;padding-left:4px;border-color:#aaa">正常启用<span class="abs" style="right:6px;top:0;font-size:10px;color:#111">▼</span></div></div>
  </div>
</div>

<svg width="0" height="0" style="position:absolute" aria-hidden="true"><linearGradient id="fg" x1="0" y1="0" x2="0" y2="1"><stop offset="0" stop-color="#fff7b8"/><stop offset="1" stop-color="#f0c93c"/></linearGradient><linearGradient id="mg" x1="0" y1="0" x2="0" y2="1"><stop offset="0" stop-color="#ffffff"/><stop offset="1" stop-color="#b9d3f0"/></linearGradient></svg>

</div>
</body>
</html>
